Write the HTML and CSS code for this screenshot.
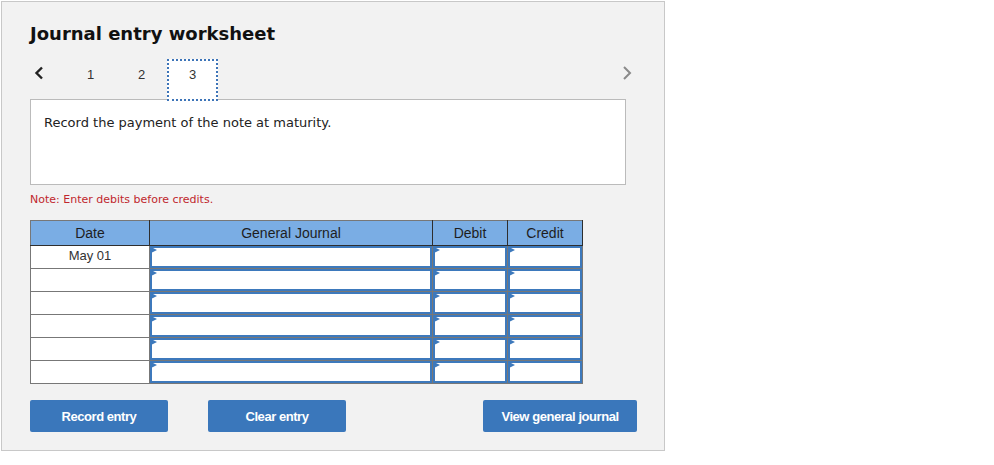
FILE: index.html
```html
<!DOCTYPE html>
<html>
<head>
<meta charset="utf-8">
<link rel="stylesheet" href="styles.css">
</head>
<body>
<div class="panel">
  <h1 class="title">Journal entry worksheet</h1>
  <div class="nav">
    <div class="chev chev-left">
      <svg width="12" height="14" viewBox="0 0 12 14"><polyline points="9,1.5 3.5,7 9,12.5" fill="none" stroke="#222" stroke-width="2.4"/></svg>
    </div>
    <div class="tab">1</div>
    <div class="tab">2</div>
    <div class="tab tab-active">3</div>
    <div class="spacer"></div>
    <div class="chev chev-right">
      <svg width="12" height="16" viewBox="0 0 12 16"><polyline points="3,2 9,8 3,14" fill="none" stroke="#8a8a8a" stroke-width="2"/></svg>
    </div>
  </div>
  <div class="question">Record the payment of the note at maturity.</div>
  <p class="note">Note: Enter debits before credits.</p>
  <table class="journal">
    <thead>
      <tr>
        <th class="c-date">Date</th>
        <th class="c-acct">General Journal</th>
        <th class="c-num">Debit</th>
        <th class="c-num">Credit</th>
      </tr>
    </thead>
    <tbody>
      <tr>
        <td class="date">May 01</td>
        <td class="in"><div class="field"><span class="flag"></span></div></td>
        <td class="in"><div class="field"><span class="flag"></span></div></td>
        <td class="in"><div class="field"><span class="flag"></span></div></td>
      </tr>
      <tr>
        <td class="date"></td>
        <td class="in"><div class="field"><span class="flag"></span></div></td>
        <td class="in"><div class="field"><span class="flag"></span></div></td>
        <td class="in"><div class="field"><span class="flag"></span></div></td>
      </tr>
      <tr>
        <td class="date"></td>
        <td class="in"><div class="field"><span class="flag"></span></div></td>
        <td class="in"><div class="field"><span class="flag"></span></div></td>
        <td class="in"><div class="field"><span class="flag"></span></div></td>
      </tr>
      <tr>
        <td class="date"></td>
        <td class="in"><div class="field"><span class="flag"></span></div></td>
        <td class="in"><div class="field"><span class="flag"></span></div></td>
        <td class="in"><div class="field"><span class="flag"></span></div></td>
      </tr>
      <tr>
        <td class="date"></td>
        <td class="in"><div class="field"><span class="flag"></span></div></td>
        <td class="in"><div class="field"><span class="flag"></span></div></td>
        <td class="in"><div class="field"><span class="flag"></span></div></td>
      </tr>
      <tr>
        <td class="date"></td>
        <td class="in"><div class="field"><span class="flag"></span></div></td>
        <td class="in"><div class="field"><span class="flag"></span></div></td>
        <td class="in"><div class="field"><span class="flag"></span></div></td>
      </tr>
    </tbody>
  </table>
  <div class="actions">
    <button class="btn btn-record">Record entry</button>
    <button class="btn btn-clear">Clear entry</button>
    <button class="btn btn-view">View general journal</button>
  </div>
</div>
</body>
</html>
```

FILE: styles.css
```css
html, body {
  margin: 0;
  padding: 0;
  background: #ffffff;
}

.panel {
  margin: 1px 0 0 1px;
  width: 664px;
  height: 450px;
  box-sizing: border-box;
  border: 1px solid #c8c8c8;
  background: #f2f2f2;
  padding: 21px 27px 0 28px;
  font-family: "DejaVu Sans", Verdana, sans-serif;
}

.title {
  margin: 0;
  font-size: 18px;
  line-height: 22px;
  font-weight: bold;
  color: #111;
}

.nav {
  display: flex;
  align-items: flex-start;
  height: 40px;
  margin-top: 14px;
  position: relative;
  z-index: 1;
}

.chev {
  display: flex;
  align-items: center;
  height: 28px;
}

.chev-left {
  width: 35px;
  padding-left: 3px;
  box-sizing: border-box;
}

.chev-right {
  width: 12px;
  margin-right: 4px;
}

.spacer {
  flex: 1;
}

.tab {
  width: 51px;
  height: 42px;
  box-sizing: border-box;
  text-align: center;
  font-family: "Liberation Sans", Arial, sans-serif;
  font-size: 13px;
  line-height: 16px;
  padding-top: 6px;
  color: #333;
  border: 2px solid transparent;
}

.tab-active {
  background: #ffffff;
  border: 2px dotted #3d74b8;
}

.question {
  width: 596px;
  height: 86px;
  box-sizing: border-box;
  border: 1px solid #bbbbbb;
  background: #ffffff;
  padding: 15px 13px;
  font-size: 13px;
  line-height: 16px;
  color: #222;
}

.note {
  margin: 8px 0 0 0;
  font-size: 11px;
  line-height: 14px;
  color: #c0272d;
}

.journal {
  margin-top: 13px;
  border-collapse: collapse;
  width: 553px;
  table-layout: fixed;
  font-family: "Liberation Sans", Arial, sans-serif;
  font-size: 13px;
  color: #333;
}

.journal th {
  background: #7aade4;
  height: 24px;
  padding: 0;
  font-size: 14px;
  font-weight: normal;
  color: #1e1e1e;
  border: 1px solid #2e2e2e;
  border-top-color: #777;
  border-left-color: #777;
}

.journal th + th {
  border-left-color: #2e2e2e;
}

.journal th:last-child {
  border-right-color: #2e2e2e;
}

.c-date { width: 118px; }
.c-acct { width: 282px; }
.c-num { width: 74px; }

.journal td {
  height: 22px;
  padding: 0;
  border: 1px solid #777777;
  background: #ffffff;
}

.journal td.date {
  text-align: center;
  vertical-align: top;
  line-height: 20px;
  font-size: 13px;
}

.journal td.in {
  position: relative;
}

.field {
  position: absolute;
  inset: 0;
  border: 2px solid #3d79bc;
  background: #ffffff;
}

.flag {
  position: absolute;
  left: -1px;
  top: -1px;
  width: 0;
  height: 0;
  border-top: 3.5px solid transparent;
  border-bottom: 3.5px solid transparent;
  border-left: 6px solid #3d79bc;
}

.actions {
  display: flex;
  margin-top: 16px;
  height: 32px;
}

.btn {
  height: 32px;
  border: none;
  border-radius: 2px;
  background: #3a77bb;
  color: #ffffff;
  font-family: "Liberation Sans Narrow", "Liberation Sans", Arial, sans-serif;
  font-weight: bold;
  font-size: 13px;
  letter-spacing: -0.45px;
  padding: 0;
  cursor: pointer;
}

.btn-record { width: 138px; }
.btn-clear { width: 138px; margin-left: 40px; }
.btn-view { width: 154px; margin-left: auto; }
```
